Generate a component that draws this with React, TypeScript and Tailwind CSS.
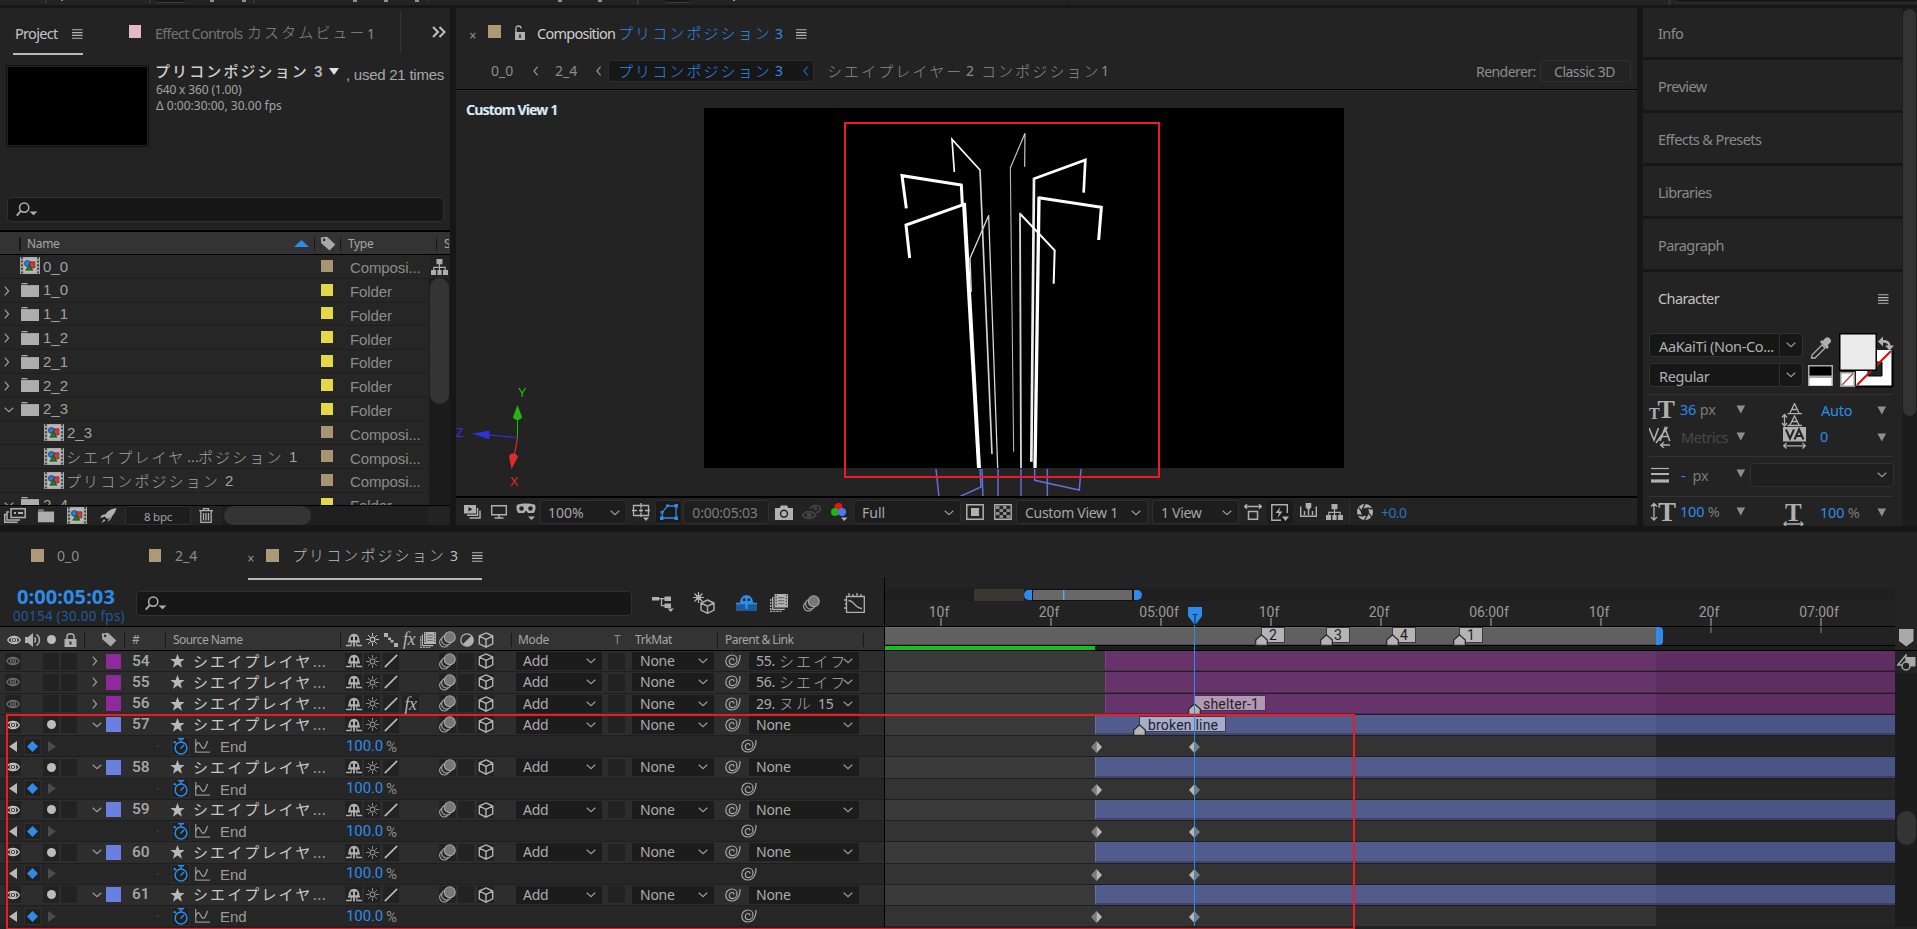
import React from "react";

type IconProps = { w: number; h: number; vb?: string; c?: string; children: React.ReactNode };

function Icon({ w, h, vb, c = "", children }: IconProps) {
  return (
    <svg width={w} height={h} viewBox={vb ?? `0 0 ${w} ${h}`} className={`block shrink-0 ${c}`} fill="none">
      {children}
    </svg>
  );
}

const JP =
  "font-['Noto_Sans_CJK_JP',sans-serif] font-light text-[15px] tracking-[2.1px] leading-none whitespace-nowrap -translate-x-px -translate-y-px";
const JP_TAB =
  "font-['Noto_Sans_CJK_JP',sans-serif] font-light text-[15px] tracking-[2.1px] leading-none whitespace-nowrap -translate-x-px -translate-y-[2px]";
const G = "#b0b0b0";

/* ---------- icons ---------- */

const Burger = ({ c = "text-[#b4b4b4]" }: { c?: string }) => (
  <Icon w={11} h={10} c={c}>
    <path d="M0 .75h10.5M0 3.6h10.5M0 6.4h10.5M0 9.2h10.5" stroke="currentColor" strokeWidth="1.1" />
  </Icon>
);
const ChevD = ({ c = "text-[#9a9a9a]" }: { c?: string }) => (
  <Icon w={10} h={6} c={c}>
    <path d="M.7.7 5 4.6 9.3.7" stroke="currentColor" strokeWidth="1.2" />
  </Icon>
);
const ChevR = ({ c = "text-[#a0a0a0]" }: { c?: string }) => (
  <Icon w={6} h={10} c={c}>
    <path d="M.8.7 4.6 5 .8 9.3" stroke="currentColor" strokeWidth="1.2" />
  </Icon>
);
const ChevL = ({ c = "text-[#8c8c8c]" }: { c?: string }) => (
  <Icon w={6} h={10} c={c}>
    <path d="M4.6.7 1 5l3.6 4.3" stroke="currentColor" strokeWidth="1.3" />
  </Icon>
);
const Cross = () => (
  <Icon w={6} h={7}>
    <path d="M.5.8 5.3 6.3M5.3.8.5 6.3" stroke="#8c8c8c" strokeWidth="1.1" />
  </Icon>
);
const SearchIcon = () => (
  <Icon w={22} h={15}>
    <circle cx="8.2" cy="5.6" r="4.6" stroke={G} strokeWidth="1.5" />
    <path d="M4.9 8.9.8 13.6" stroke={G} strokeWidth="1.8" />
    <path d="M13.5 9.5h8l-4 3.8z" fill={G} />
  </Icon>
);
const Tag = () => (
  <Icon w={16} h={15}>
    <path d="M.8 1.6 7 .7l8.3 7.8-5.7 6L1.3 7.2z" fill="#a8a8a8" />
    <circle cx="4.1" cy="3.9" r="1.3" fill="#333" />
  </Icon>
);
const Comp = () => (
  <Icon w={20} h={17}>
    <path d="M0 0h20v17H0z" fill="#a9a9a9" />
    <path d="M1.9 0v17M18.1 0v17" stroke="#303030" strokeWidth="1.6" strokeDasharray="2 1.6" />
    <path d="M4 1.5h12v14H4z" fill="#b9b9b9" />
    <circle cx="7.4" cy="6.4" r="3" fill="#1f7fe0" stroke="#222" strokeWidth=".6" />
    <path d="M9.8 4.8h5v6h-5z" fill="#e03434" stroke="#222" strokeWidth=".6" />
    <path d="m9.3 7.6 3.6 5.6H5.8z" fill="#128a12" stroke="#222" strokeWidth=".6" />
  </Icon>
);
const Folder = () => (
  <Icon w={18} h={15}>
    <path d="M.5 1h6v2h11.500v12H0V3h.5z" fill="#adadad" />
    <path d="M0 2.600h18" stroke="#262626" strokeWidth=".8" />
  </Icon>
);
const Tree = () => (
  <Icon w={17} h={16}>
    <path d="M5.500 0h6v5.200h-6zM0 11h5.600v5H0zM11.400 11H17v5h-5.600zM5.900 11h5.200v5H5.900z" fill="#adadad" />
    <path d="M8.500 5v6M2.800 11V8.400h11.400V11" stroke="#adadad" strokeWidth="1.2" />
    <path d="M5.750 10.600V16M11.250 10.600V16" stroke="#232323" strokeWidth="1.3" />
  </Icon>
);
const Eye = ({ c = "text-[#bdbdbd]" }: { c?: string }) => (
  <Icon w={14} h={10} c={c}>
    <path d="M.7 5C3.200.3 10.800.3 13.300 5 10.800 9.700 3.200 9.700.7 5z" stroke="currentColor" strokeWidth="1.400" />
    <circle cx="7" cy="5" r="2.700" stroke="currentColor" strokeWidth="1.300" />
    <circle cx="7" cy="5" r="1.200" fill="currentColor" />
  </Icon>
);
const Shy = ({ c = "text-[#b0b0b0]" }: { c?: string }) => (
  <Icon w={16} h={14} c={c}>
    <path d="M2.500 8.500C2.300 3.500 5 .8 8 .8s5.700 2.700 5.500 7.700z" fill="currentColor" />
    <path d="M4.800 3.800h2.200v3.400H4.800zM9 3.800h2.200v3.400H9z" fill="#222" />
    <path d="M2 8.700h12M0 12.500h5.500M10.500 12.500H16" stroke="currentColor" strokeWidth="1.400" />
    <path d="M8 6v7.500" stroke="currentColor" strokeWidth="1.800" />
    <path d="M5.200 9v3.500M10.800 9v3.500" stroke="currentColor" strokeWidth="1" />
  </Icon>
);
const Sun = ({ c = "text-[#8a8a8a]" }: { c?: string }) => (
  <Icon w={13} h={13} c={c}>
    <circle cx="6.500" cy="6.500" r="2.400" stroke="currentColor" strokeWidth="1.200" />
    <path
      d="M6.500 0v3M6.500 10v3M0 6.500h3M10 6.500h3M2 2l2 2M9 9l2 2M11 2 9 4M4 9l-2 2"
      stroke="currentColor"
      strokeWidth="1"
    />
  </Icon>
);
const Slash = () => (
  <Icon w={14} h={14}>
    <path d="M.8 13.200 13.200.8" stroke="#b8b8b8" strokeWidth="1.700" />
  </Icon>
);
const Blur = () => (
  <Icon w={17} h={17}>
    <circle cx="5.300" cy="11.300" r="4.700" fill="#2a2a2a" stroke="#a8a8a8" strokeWidth="1.100" />
    <circle cx="7.600" cy="9" r="5" fill="#2a2a2a" stroke="#a8a8a8" strokeWidth="1.100" />
    <circle cx="10.800" cy="6.200" r="5.400" fill="#777" stroke="#a8a8a8" strokeWidth="1.100" />
  </Icon>
);
const Cube = ({ s = 16 }: { s?: number }) => (
  <Icon w={s} h={s} vb="0 0 16 16">
    <path d="M8 .9 14.700 4v7.800L8 15.100 1.300 11.800V4zM1.300 4 8 7.400 14.700 4M8 7.400v7.700" stroke="#b4b4b4" strokeWidth="1.400" />
  </Icon>
);
const Whip = () => (
  <Icon w={16} h={14}>
    <path
      d="M14.800 1c.9 6-2.500 12-8 12C3.200 13 .8 10.500.8 7.200.8 3.700 3.600 1 7 1c3 0 5 2.100 5 4.700 0 2.800-1.900 4.900-4.300 4.900-2 0-3.400-1.300-3.400-3.100 0-1.700 1.300-3 2.800-3 1.300 0 2 .9 1.700 2.200"
      stroke="#a9a9a9"
      strokeWidth="1.200"
    />
  </Icon>
);
const Star = () => (
  <Icon w={15} h={14}>
    <path d="m7.500 0 1.900 5h5.300l-4.200 3.300 1.500 5.400-4.500-3.200L3 13.700l1.500-5.400L.3 5h5.300z" fill="#b8b8b8" />
  </Icon>
);
const Fx = () => <span className="font-['Liberation_Serif',serif] text-[18px] italic leading-none text-[#b4b4b4] tracking-[-0.5px]">fx</span>;
const LockIcon = () => (
  <Icon w={13} h={14}>
    <path d="M.5 6h12v8H.5z" fill={G} />
    <path d="M3 6V3.600C3 1.800 4.500.8 6.500.8S10 1.800 10 3.600V6" stroke={G} strokeWidth="1.500" />
    <path d="M6.500 8.500v3" stroke="#2c2c2c" strokeWidth="2" />
  </Icon>
);
const FrameBlend = () => (
  <Icon w={18} h={18}>
    <path d="M4.500 0H18v13.500H4.500z" fill="#b4b4b4" />
    <path d="M8 3h6.500v1.200H8zM8 6h6.500v1.200H8zM8 9h6.500v1.200H8z" fill="#6f6f6f" />
    <path d="M6.200.8v12M16.400.8v12" stroke="#333" strokeWidth="1.100" strokeDasharray="1.500 1.500" />
    <path d="M2.700 3v12.300h12" stroke="#b4b4b4" strokeWidth="1.300" />
    <path d="M.7 5v12.300h11" stroke="#b4b4b4" strokeWidth="1.300" strokeDasharray="2 1" />
  </Icon>
);
const RoofMarker = () => (
  <Icon w={13} h={12}>
    <path d="M.7 11.300V6L6.500.9 12.300 6v5.300z" fill="#b4b4b4" stroke="#242424" strokeWidth="1.200" />
  </Icon>
);
const TriDown = () => (
  <Icon w={10} h={9}>
    <path d="M.5.5h8.600L4.800 8.500z" fill="#8f8f8f" />
  </Icon>
);

/* ---------- project panel ---------- */

type Item = { kind: "comp" | "folder"; name: React.ReactNode; depth: number; open?: boolean };
const items: Item[] = [
  { kind: "comp", name: "0_0", depth: 0 },
  { kind: "folder", name: "1_0", depth: 0 },
  { kind: "folder", name: "1_1", depth: 0 },
  { kind: "folder", name: "1_2", depth: 0 },
  { kind: "folder", name: "2_1", depth: 0 },
  { kind: "folder", name: "2_2", depth: 0 },
  { kind: "folder", name: "2_3", depth: 0, open: true },
  { kind: "comp", name: "2_3", depth: 1 },
  {
    kind: "comp",
    depth: 1,
    name: (
      <>
        <span className={`${JP} w-[120px]`}>シエイプレイヤ</span>
        <span className="w-[12px] tracking-[-0.3px]">...</span>
        <span className={`${JP} w-[90px]`}>ポジション</span>1
      </>
    ),
  },
  {
    kind: "comp",
    depth: 1,
    name: (
      <>
        <span className={`${JP} w-[158px]`}>プリコンポジション</span>2
      </>
    ),
  },
  { kind: "folder", name: "2_4", depth: 0, open: true },
];

function ProjectPanel() {
  return (
    <section className="flex h-[517px] w-[450px] shrink-0 flex-col bg-[#232323]">
      <div className="flex h-[55px] shrink-0 items-start [&>*]:shrink-0">
        <div className="ml-[13px] flex h-[47px] w-[70px] items-center justify-between border-b-2 border-[#b9b9b9] pl-[2px] pt-[6px]">
          <span className="text-[14.5px] tracking-[-0.7px] text-[#c4c4c4]">Project</span>
          <Burger />
        </div>
        <div className="ml-[46px] mt-[17px] h-[13px] w-[12px] bg-[#e3b9c9]" />
        <div className="ml-[14px] flex h-[51px] w-[93px] items-center whitespace-nowrap text-[14.5px] tracking-[-0.8px] text-[#727272]">Effect Controls</div>
        <div className="flex h-[51px] w-[152px] items-center text-[#8a8a8a]">
          <span className={`${JP_TAB} w-[119px]`}>カスタムビュー</span>
          <span className="text-[14px]">1</span>
        </div>
        <div className="mt-[3px] h-[42px] w-px bg-[#343434]" />
        <Icon w={14} h={12} c="ml-[31px] mt-[18px]">
          <path d="m1 1 5 5-5 5M7.500 1l5 5-5 5" stroke="#c0c0c0" strokeWidth="2" />
        </Icon>
      </div>

      <div className="flex h-[134px] shrink-0 pl-[6px] pt-[2px]">
        <div className="h-[82px] w-[143px] border border-[#111] bg-black outline outline-1 -outline-offset-2 outline-[#222]" />
        <div className="ml-[7px] text-[12px] leading-[16px] text-[#a4a4a4]">
          <div className="flex h-[17px] items-center">
            <span className="w-[158px] -translate-x-px -translate-y-[3px] whitespace-nowrap font-['Noto_Sans_CJK_JP',sans-serif] text-[15px] font-medium leading-none tracking-[2.1px] text-[#cfcfcf]">プリコンポジション</span>
            <span className="w-[15px] -translate-y-[2px] font-['Roboto',sans-serif] text-[15px] font-bold text-[#b4b4b4]">3</span>
            <Icon w={10} h={7} c="mr-[7px] -translate-y-[2px]">
              <path d="M0 0h10L5 7z" fill="#e2e2e2" />
            </Icon>
            <span className="mt-[2px] whitespace-nowrap font-['Liberation_Sans',sans-serif] text-[15px] tracking-[-0.25px] text-[#a8a8a8]">, used 21 times</span>
          </div>
          <div className="tracking-[-0.15px]">640 x 360 (1.00)</div>
          <div className="tracking-[0px]">Δ 0:00:30:00, 30.00 fps</div>
        </div>
      </div>

      <div className="ml-[7px] flex h-[25px] w-[437px] shrink-0 items-center rounded-[4px] border border-[#303030] bg-[#171717] pl-[8px]">
        <SearchIcon />
      </div>

      <div className="mt-[8px] flex h-[25px] shrink-0 items-center border-b border-t-2 border-black bg-[#333] pt-px text-[12px] tracking-[-0.35px] text-[#a6a6a6] [&>*]:shrink-0">
        <div className="ml-[19px] h-[14px] w-[2px] bg-[#181818]" />
        <span className="ml-[6px] w-[267px]">Name</span>
        <Icon w={15} h={7} c="mr-[5px]">
          <path d="M0 7h15L7.500 0z" fill="#2d8ceb" />
        </Icon>
        <div className="mr-[5px] h-[14px] w-px bg-[#181818]" />
        <Tag />
        <div className="ml-[4px] h-[14px] w-px bg-[#181818]" />
        <span className="ml-[7px] w-[88px]">Type</span>
        <div className="h-[14px] w-px bg-[#181818]" />
        <span className="ml-[7px] w-[5px] overflow-hidden">S</span>
      </div>

      <div className="flex h-[250px] shrink-0 overflow-hidden">
        <div className="w-[429px] font-['Liberation_Sans',sans-serif] text-[15px] text-[#a2a2a2]">
          {items.map((it, i) => (
            <div key={i} className="flex h-[23.8px] items-center border-b border-[#1f1f1f] bg-[#262626] pt-px">
              <div className="flex w-[20px] shrink-0 items-center pl-[4px]">
                {it.kind === "folder" && (it.open ? <ChevD /> : <ChevR />)}
              </div>
              <div className={it.depth ? "ml-[24px] flex w-[277px] items-center" : "flex w-[301px] items-center"}>
                <div className="w-[23px] pb-[2px]">
                  {it.kind === "comp" ? <Comp /> : <div className="pl-px"><Folder /></div>}
                </div>
                <div className="flex items-center whitespace-nowrap">{it.name}</div>
              </div>
              <div className={it.kind === "comp" ? "mb-[2px] h-[12px] w-[12px] bg-[#a89472]" : "mb-[2px] h-[12px] w-[12px] bg-[#e4d848]"} />
              <span className="ml-[17px] mt-[3px] text-[15px] tracking-[-0.1px] text-[#8c8c8c]">{it.kind === "comp" ? "Composi..." : "Folder"}</span>
            </div>
          ))}
        </div>
        <div className="flex w-[21px] flex-col bg-[#1c1c1c]">
          <div className="flex h-[23px] justify-center bg-[#232323] pt-[4px]">
            <Tree />
          </div>
          <div className="ml-px h-[126px] w-[19px] rounded-full bg-[#343434]" />
        </div>
      </div>

      <div className="flex h-[20px] shrink-0 items-center border-t border-black [&>*]:shrink-0">
        <Icon w={22} h={15} c="ml-[4px]">
          <path d="M7 .800h14.200v8.800H7z" stroke={G} strokeWidth="1.500" />
          <path d="M10 5h2M14 5h5" stroke={G} strokeWidth="2" />
          <path d="M5 4H3v8h13M2.500 6.500H.7v7.700h13" stroke={G} strokeWidth="1.500" />
        </Icon>
        <div className="ml-[11px] scale-[.92]"><Folder /></div>
        <div className="ml-[12px]"><Comp /></div>
        <Icon w={17} h={16} c="ml-[13px]">
          <path d="M16.500 0C10 1 6 4 4.500 8.500l3 2.500C12 9 15 6 16.500 0zM6 6 2 7 0 10l4-1zM8.500 11.500 8 14l3.500-4 .5-2zM4 11l-2.500 4L5.500 12.500z" fill={G} />
        </Icon>
        <div className="ml-[8px] flex h-[19px] w-[66px] items-center justify-center rounded-[3px] border border-[#2f2f2f] bg-[#1d1d1d] pt-[2px] text-[11.500px] tracking-[-0.200px] text-[#a0a0a0]">8 bpc</div>
        <Icon w={14} h={15} c="ml-[8px]">
          <path d="M0 2.700h14M4.500 2.500V.700h5v1.800" stroke={G} strokeWidth="1.300" />
          <path d="M1.800 3v11.300h10.400V3M4.500 5v7.500M7 5v7.500M9.500 5v7.500" stroke={G} strokeWidth="1.300" />
        </Icon>
        <div className="ml-[9px] flex h-[19px] w-[206px] bg-[#1f1f1f]">
          <div className="ml-[2px] h-[19px] w-[87px] rounded-full bg-[#343434]" />
        </div>
      </div>
    </section>
  );
}

/* ---------- composition panel ---------- */

function Viewport() {
  return (
    <svg width="1181" height="405" viewBox="456 91 1181 405" className="block" fill="none">
      <path d="M704 108h640v360H704z" fill="#000" />
      <g transform="translate(820 100) scale(.33333)" stroke="#fff" strokeLinejoin="miter">
        <path d="M403 216 396 118l84 92" strokeWidth="5" />
        <path d="m480 208 36 854" strokeWidth="5" stroke="#d4d4d4" />
        <path d="m614 200 1-100-44 104" strokeWidth="3.500" stroke="#cdcdcd" />
        <path d="m571 200 10 855" strokeWidth="3.200" stroke="#b8b8b8" />
        <path d="m259 325-13-98 178 28 3 60" strokeWidth="9" />
        <path d="m269 474-11-99 174-62" strokeWidth="9" />
        <path d="M426 308h12l45 796h-12z" fill="#fff" stroke="none" />
        <path d="m454 575-4-100 55-126" strokeWidth="4" stroke="#d8d8d8" />
        <path d="m506 345 27 759" strokeWidth="3.800" stroke="#d8d8d8" />
        <path d="m791 278 5-98-154 56" strokeWidth="8" />
        <path d="m642 233-8 852" strokeWidth="8" stroke="#eee" />
        <path d="m836 420 8-98-188-29" strokeWidth="9" />
        <path d="m657 290-12 814" strokeWidth="10" />
        <path d="m701 551 3-100-103-109" strokeWidth="6" />
        <path d="m600 338 3 766" strokeWidth="5.500" stroke="#d4d4d4" />
        <g stroke="#5f70d6" strokeWidth="4.500">
          <path d="m348 1107 9 84M480 1107l3 54-66 30M486 1107l3 84M534 1107v84M603 1107v84M682 1107v84M644 1107v34l134 29 5-63" />
        </g>
      </g>
      <path d="M517.500 437.500v-20" stroke="#22b80f" strokeWidth="1" />
      <path d="m517.500 405 4.500 12c-1 4-8 4-9 0z" fill="#22b80f" />
      <path d="m517 437.500-28-2.500" stroke="#3030e0" strokeWidth="1.200" />
      <path d="m471.500 433.500 18-2.800v8.600z" fill="#3030e0" />
      <path d="m517.500 437.500-3.500 20" stroke="#e02c2c" strokeWidth="1.200" />
      <path d="m511.500 469-2.500-13c2-4 8-3 9 1z" fill="#e02c2c" />
      <g fontFamily="Liberation Sans" fontSize="12.500">
        <text x="518" y="397" fill="#22b80f">Y</text>
        <text x="456" y="437" fill="#3030e0">Z</text>
        <text x="510" y="486" fill="#e02c2c">X</text>
      </g>
    </svg>
  );
}

function Select({ c, label, children }: { c: string; label: string; children?: React.ReactNode }) {
  return (
    <div className={`flex h-[24px] items-center justify-between rounded-[3px] border border-[#2f2f2f] bg-[#1d1d1d] pl-[7px] pr-[6px] pt-px text-[14px] text-[#a6a6a6] ${c}`}>
      <span className="whitespace-nowrap">{label}</span>
      {children ?? <ChevD />}
    </div>
  );
}

function CompositionPanel() {
  return (
    <section className="ml-[6px] flex h-[517px] w-[1181px] shrink-0 flex-col bg-[#232323]">
      <div className="flex h-[52px] shrink-0 items-center text-[14.500px] [&>*]:shrink-0">
        <div className="ml-[14px] mt-[2px] w-[18px]"><Cross /></div>
        <div className="-mt-[5px] h-[13px] w-[13px] bg-[#ad9877]" />
        <Icon w={11} h={15} c="-mt-[4px] ml-[13px]">
          <path d="M1 7h10v8H1z" fill={G} />
          <path d="M2 7V3.500C2 1.800 3 1 4.500 1S7 1.800 7 3.500" stroke={G} strokeWidth="1.400" />
          <path d="M6 9.500V13" stroke="#232323" strokeWidth="1.600" />
        </Icon>
        <span className="ml-[12px] w-[82px] tracking-[-0.75px] text-[#cfcfcf]">Composition</span>
        <span className={`${JP_TAB} w-[156px] text-[#2d8ceb]`}>プリコンポジション</span>
        <span className="w-[21px] -translate-y-px text-[14px] text-[#2d8ceb]">3</span>
        <Burger />
      </div>
      <div className="flex h-[29px] shrink-0 items-start text-[14px] leading-[22px] text-[#8c8c8c] [&>*]:h-[22px] [&>*]:shrink-0">
        <span className="ml-[35px] w-[42px]">0_0</span>
        <div className="flex w-[22px] items-center"><ChevL /></div>
        <span className="w-[41px]">2_4</span>
        <div className="flex w-[12px] items-center"><ChevL /></div>
        <div className="flex w-[206px] items-center rounded-[3px] border border-[#2c2c2c] bg-[#171717] text-[#2d8ceb]">
          <span className={`${JP} ml-[10px] w-[156px]`}>プリコンポジション</span>
          <span className="w-[28px]">3</span>
          <ChevL c="text-[#1f62a5]" />
        </div>
        <span className={`${JP} ml-[14px] flex w-[138px] items-center`}>シエイプレイヤー</span>
        <span className="w-[16px]">2</span>
        <span className={`${JP} flex w-[119px] items-center`}>コンポジション</span>
        <span className="w-[375px]">1</span>
        <span className="mt-[1px] w-[64px] tracking-[-0.55px] text-[#8c8c8c]">Renderer:</span>
        <div className="w-[91px] rounded-[3px] border border-[#303030] pr-[2px] text-center leading-[21px] tracking-[-0.5px] text-[#8f8f8f]">Classic 3D</div>
      </div>
      <div className="h-[2px] shrink-0 border-b border-[#2e2e2e] bg-black" />
      <div className="relative h-[405px] shrink-0">
        <Viewport />
        <span className="absolute left-[10px] top-[9px] text-[14px] font-semibold leading-[20px] tracking-[-0.65px] text-[#ececec] [text-shadow:1px_0_0_#3c7fa8]">Custom View 1</span>
      </div>
      <div className="flex h-[29px] shrink-0 items-center border-t-2 border-black pt-px [&>*]:shrink-0">
        <Icon w={17} h={14} c="ml-[8px]">
          <path d="M0 0h12v8.500H0z" fill={G} />
          <path d="m4.500 2 4 2.300-4 2.300z" fill="#232323" />
          <path d="M13.500 3v7.200H3M16 5.500v7.500H5.500" stroke={G} strokeWidth="1.500" />
        </Icon>
        <Icon w={16} h={14} c="ml-[10px]">
          <path d="M.7.700h14.600v9H.7z" stroke={G} strokeWidth="1.400" />
          <path d="M8 10v2.500M3.500 13h9" stroke={G} strokeWidth="1.600" />
        </Icon>
        <Icon w={20} h={18} c="ml-[9px]">
          <path d="M1.500 1.500C6 0 14 0 18.500 1.500c1.500 1 1.500 6-1 8.500H12l-2-2.500L8 10H2.500C0 7.500 0 2.500 1.500 1.500z" fill={G} />
          <circle cx="5.500" cy="5.500" r="2.300" fill="#232323" />
          <circle cx="14.500" cy="5.500" r="2.300" fill="#232323" />
          <path d="M12 13.500h7L15.500 17z" fill={G} />
        </Icon>
        <Select c="ml-[4px] w-[87px]" label="100%" />
        <Icon w={18} h={18} c="ml-[5px]">
          <path d="M1.500 2.500h15v10h-15z" stroke={G} strokeWidth="1.300" />
          <path d="M9 0v5M9 10v4M0 7.500h5M13 7.500h5M7 7.500h4M9 5.500v4" stroke={G} strokeWidth="1.300" />
          <path d="M11 14.500h6L14 18z" fill={G} />
        </Icon>
        <div className="ml-[5px] flex h-[24px] w-[27px] items-center justify-center rounded-[3px] border border-[#2c2c2c] bg-[#1a1a1a]">
          <Icon w={18} h={16}>
            <path d="m2 14 .5-6L7.500 2H16v12z" stroke="#2d8ceb" strokeWidth="1.300" />
            <path d="M0 12.500h3.500V16H0zM14.500 12.500H18V16h-3.500zM14.500 0H18v3.500h-3.500zM6 .5h3V3H6zM.5 7h3v2.500h-3z" fill="#2d8ceb" />
          </Icon>
        </div>
        <div className="ml-px flex h-[24px] w-[86px] items-center justify-center rounded-[3px] border border-[#2f2f2f] bg-[#1f1f1f] pr-[2px] text-[14px] tracking-[-0.2px] text-[#7d7d7d]">0:00:05:03</div>
        <Icon w={18} h={15} c="ml-[6px]">
          <path d="M0 3h4.500L6 .5h6L13.500 3H18v12H0z" fill={G} />
          <circle cx="9" cy="8.700" r="3.400" stroke="#232323" strokeWidth="1.500" />
        </Icon>
        <Icon w={19} h={17} c="ml-[9px]">
          <path d="M.7 11c2.500-4.500 10.500-4.500 13 0-2.500 4.500-10.500 4.500-13 0z" stroke="#444" strokeWidth="1.600" />
          <circle cx="7.200" cy="11" r="2.500" fill="#444" />
          <path d="M8 5c2-4 8-4.500 10.500-1.500-.5 3-2 5-4.500 5" stroke="#444" strokeWidth="1.600" />
          <circle cx="13.500" cy="4.500" r="1.800" fill="#444" />
        </Icon>
        <Icon w={18} h={18} c="ml-[10px]">
          <circle cx="7.500" cy="4" r="4" fill="#f01010" />
          <circle cx="4" cy="9" r="4" fill="#16b716" />
          <circle cx="11" cy="9" r="4" fill="#4a78f0" />
          <path d="M10 14.500h6.500L13.200 18z" fill={G} />
        </Icon>
        <Select c="ml-[4px] w-[108px] pl-[8px]!" label="Full" />
        <Icon w={18} h={16} c="ml-[5px]">
          <path d="M.8.800h16.400v14.400H.8z" stroke={G} strokeWidth="1.500" />
          <path d="M5 4h8v8H5z" fill={G} />
        </Icon>
        <Icon w={18} h={16} c="ml-[10px]">
          <path d="M.8.800h16.400v14.400H.8z" stroke={G} strokeWidth="1.400" />
          <path d="M2 2h3.500v3H2zM9 2h3.500v3H9zM5.500 5H9v3H5.500zM12.500 5H16v3h-3.500zM2 8h3.500v3H2zM9 8h3.500v3H9zM5.500 11H9v3H5.500zM12.500 11H16v3h-3.500z" fill="#8a8a8a" />
        </Icon>
        <Select c="ml-[4px] w-[132px] pl-[8px]! tracking-[-0.300px]" label="Custom View 1" />
        <Select c="ml-[4px] w-[87px] pl-[8px]! tracking-[-0.300px]" label="1 View" />
        <Icon w={18} h={16} c="ml-[5px]">
          <path d="M0 2.500h18M3 .3.700 2.500 3 4.700M15 .3l2.300 2.200L15 4.700M4.500 7.500h9v7.700h-9z" stroke={G} strokeWidth="1.500" />
        </Icon>
        <div className="ml-[5px] flex h-[24px] w-[26px] items-center justify-center rounded-[3px] bg-[#1b1b1b]">
          <Icon w={18} h={17}>
            <path d="M16.300 9V.800H.8v15.400H10" stroke={G} strokeWidth="1.400" />
            <path d="m9.500 3-5 6H8l-1.500 5 5-6.500H8z" fill={G} />
            <path d="M11 12.500h7L14.500 17z" fill={G} />
          </Icon>
        </div>
        <Icon w={17} h={14} c="ml-[7px] -mt-[4px]">
          <path d="M.7 3.500v9.700h15.600V3.500M4.500 8v4M12.500 8v4M8.500 6v6" stroke={G} strokeWidth="1.400" />
          <path d="M5.700 0h5.600v4.500L8.500 7 5.700 4.500z" fill={G} />
        </Icon>
        <div className="ml-[9px]"><Tree /></div>
        <div className="ml-[6px] h-[24px] w-px bg-[#2f2f2f]" />
        <Icon w={16} h={16} c="ml-[7px]">
          <circle cx="8" cy="8" r="6" stroke={G} strokeWidth="4" />
          <path d="M8 0 5 6M15.500 5 9.500 4M14.500 13 11 8M7.500 16l3.500-6M.5 11l6 1M2 3.500 5 8.500" stroke="#232323" strokeWidth="1.300" />
        </Icon>
        <span className="ml-[8px] text-[14px] tracking-[-0.600px] text-[#2673c2]">+0.0</span>
      </div>
    </section>
  );
}

/* ---------- right column ---------- */

function CharRow({ h, left, v1, v2, tri = true }: { h: string; left: React.ReactNode; v1: React.ReactNode; v2: React.ReactNode; tri?: boolean }) {
  return (
    <div className={`flex items-start text-[14.500px] leading-[20px] text-[#7a7a7a] [&>*]:shrink-0 ${h}`}>
      <div className="w-[31px]">{left}</div>
      <div className="w-[56px] whitespace-nowrap">{v1}</div>
      <div className="w-[14px] pt-[6px]"><TriDown /></div>
      {v2}
      {tri && <div className="pt-[7px]"><TriDown /></div>}
    </div>
  );
}
const Blue = ({ children }: { children: React.ReactNode }) => <span className="text-[#2d8ceb]">{children}</span>;

function FontSelect({ label, c }: { label: string; c: string }) {
  return (
    <div className={`flex h-[24px] w-[154px] items-center rounded-[3px] border border-[#303030] bg-[#171717] text-[14.500px] tracking-[-0.350px] text-[#b0b0b0] ${c}`}>
      <span className="h-full w-[130px] whitespace-nowrap pl-[9px] pt-px leading-[22px]">{label}</span>
      <div className="flex h-full w-[23px] items-center justify-center border-l border-[#303030]">
        <ChevD />
      </div>
    </div>
  );
}

function RightColumn() {
  return (
    <aside className="ml-[6px] flex h-[518px] w-[274px] shrink-0">
      <div className="flex w-[259px] flex-col overflow-hidden bg-[#232323] text-[14.500px] tracking-[-0.600px] text-[#8a8a8a]">
        {["Info", "Preview", "Effects & Presets", "Libraries", "Paragraph"].map((t) => (
          <div key={t} className="flex h-[53px] shrink-0 items-center border-b-[3px] border-[#161616] pl-[15px] pt-[3px] first:h-[52px]">
            {t}
          </div>
        ))}
        <div className="flex h-[61px] shrink-0 items-center justify-between pl-[15px] pr-[13px] pb-[7px] text-[#c0c0c0]">
          <span>Character</span>
          <Burger />
        </div>
        <div className="flex h-[61px] shrink-0 pl-[6px] tracking-normal">
          <div>
            <FontSelect label="AaKaiTi (Non-Co..." c="" />
            <FontSelect label="Regular" c="mt-[6px]" />
          </div>
          <svg width="90" height="58" viewBox="1804 332 90 58" fill="none" className="ml-px -mt-px block">
            <path d="m1811.500 358 .5-3 10-10 3 3-10 10z" stroke="#b0b0b0" strokeWidth="1.300" />
            <path d="m1820 342 7 7 2-2-1.500-1.500 3-3c2-2-2-7-5-4.500l-3 3-1-1z" fill="#b0b0b0" />
            <path d="M1808 365h25v21h-25z" fill="#aaa" />
            <path d="M1809.500 366.500h22v9h-22z" fill="#000" />
            <path d="M1809.500 378h22v7.500h-22z" fill="#fff" />
            <path d="M1856 350h37.500v37.500H1856z" fill="#000" />
            <path d="M1856 350h35.500v35.500H1856z" fill="#fff" />
            <path d="M1868 362h14v14h-14z" fill="#222" stroke="#000" strokeWidth="1" />
            <path d="m1857 385 34-34" stroke="#d01212" strokeWidth="2.200" />
            <path d="M1840 372h15v15h-15z" fill="#999" />
            <path d="M1841.500 373.500h12v12h-12z" fill="#fff" />
            <path d="m1842 385 11-11.500" stroke="#d04040" strokeWidth="1.500" />
            <path d="M1839 333h38v38h-38z" fill="#000" />
            <path d="M1840.500 334.500h35v35h-35z" fill="#ebebeb" />
            <path d="M1882 341.500c5-.5 7.500 1 7.500 5" stroke="#b0b0b0" strokeWidth="2.600" />
            <path d="m1878 341.500 5-5v10zM1885 345.500h9l-4.500 5z" fill="#b0b0b0" />
          </svg>
        </div>
        <div className="mx-[6px] mr-[9px] h-px shrink-0 bg-[#333]" />
        <div className="shrink-0 pl-[6px] tracking-[-0.200px]">
          <div className="h-[61px] pt-[4px]">
            <CharRow
              h="h-[27px]"
              left={
                <div className="flex items-end font-['Liberation_Serif',serif] font-bold text-[#b0b0b0]">
                  <span className="text-[16px] leading-[13px]">T</span>
                  <span className="-ml-[2px] text-[26px] leading-[21px]">T</span>
                </div>
              }
              v1={<><Blue>36</Blue>&nbsp;px</>}
              v2={
                <>
                  <div className="ml-[31px] w-[40px] pt-[4px]">
                    <Icon w={21} h={24}>
                      <path d="M3.500 12.500v9M1 14.500l2.500-3 2.500 3M1 20l2.500 3L6 20" stroke={G} strokeWidth="1.300" />
                      <path d="m9 10 4.500-9.500L18 10M10.500 6.500h6M9 22l4.500-9L18 22M10.500 18.500h6M6.500 10.600H21M6.500 22.500H21" stroke={G} strokeWidth="1.300" />
                    </Icon>
                  </div>
                  <span className="w-[56px] pt-px"><Blue>Auto</Blue></span>
                </>
              }
            />
            <CharRow
              h="h-[26px]"
              left={
                <Icon w={23} h={22}>
                  <path d="m0 2 5 12 4.500-12M18.500 1 7 17M11 15l5-13 4.800 13M12.500 10.500h7" stroke={G} strokeWidth="1.600" />
                  <path d="M21 19h-9M15 16l-3.500 3 3.500 3" stroke={G} strokeWidth="1.300" />
                </Icon>
              }
              v1={<div className="pl-px pt-px tracking-[-0.450px] text-[#4a4a4a]">Metrics</div>}
              v2={
                <>
                  <div className="ml-[33px] w-[37px] pt-px">
                    <Icon w={24} h={22}>
                      <path d="M0 0h23v14.500H0z" fill={G} />
                      <path d="m3 2.500 4 9 4-9M11.500 12.500l4.500-10 4.500 10M13 9h6" stroke="#222" strokeWidth="2" />
                      <path d="M.8 18.800h21.400M3.500 16 .7 18.800l2.800 2.700M19.500 16l2.800 2.800-2.800 2.700" stroke={G} strokeWidth="1.300" />
                    </Icon>
                  </div>
                  <span className="w-[57px]"><Blue>0</Blue></span>
                </>
              }
            />
          </div>
          <div className="mr-[9px] h-px bg-[#333]" />
          <div className="h-[39px] pt-[6px]">
            <CharRow
              h="h-[26px]"
              tri={false}
              left={
                <Icon w={20} h={24}>
                  <path d="M2 5.500h18" stroke={G} strokeWidth="1.200" />
                  <path d="M2 11h18" stroke={G} strokeWidth="2" />
                  <path d="M2 18h18" stroke={G} strokeWidth="3.200" />
                </Icon>
              }
              v1={<div className="pl-px pt-[2px]"><Blue>-</Blue>&nbsp; px</div>}
              v2={
                <div className="flex h-[24px] w-[144px] items-center justify-end rounded-[3px] border border-[#303030] bg-[#1f1f1f] pr-[6px]">
                  <ChevD />
                </div>
              }
            />
          </div>
          <div className="mr-[9px] h-px bg-[#333]" />
          <div className="pt-[4px]">
            <CharRow
              h="h-[26px]"
              left={
                <div className="flex items-center pt-px">
                  <Icon w={8} h={20} c="ml-px">
                    <path d="M4 1.500v16M1 4.500l3-3 3 3M1 15l3 3 3-3" stroke={G} strokeWidth="1.300" />
                  </Icon>
                  <span className="font-['Liberation_Serif',serif] text-[27px] font-bold leading-[20px] text-[#b0b0b0]">T</span>
                </div>
              }
              v1={<><Blue>100</Blue> %</>}
              v2={
                <>
                  <div className="ml-[33px] flex w-[37px] flex-col">
                    <span className="pl-[2px] pt-[3px] font-['Liberation_Serif',serif] text-[25px] font-bold leading-[17px] text-[#b0b0b0]">T</span>
                    <Icon w={22} h={6}>
                      <path d="M1 3h19M3.500.500 1 3l2.500 2.500M17.500.500 20 3l-2.500 2.500" stroke={G} strokeWidth="1.300" />
                    </Icon>
                  </div>
                  <span className="w-[57px] pt-px"><Blue>100</Blue> %</span>
                </>
              }
            />
          </div>
        </div>
      </div>
      <div className="flex w-[15px] justify-center bg-[#1c1c1c] pt-px">
        <div className="h-[407px] w-[13px] rounded-[7px] bg-[#333]" />
      </div>
    </aside>
  );
}

/* ---------- timeline ---------- */

type Layer = { n: number; violet?: boolean; fx?: boolean; parent: React.ReactNode };
const layers: Layer[] = [
  { n: 54, violet: true, parent: <><span className="w-[24px]">55.</span><span className={`${JP} w-[62px]`}>シエイフ</span></> },
  { n: 55, violet: true, parent: <><span className="w-[24px]">56.</span><span className={`${JP} w-[62px]`}>シエイフ</span></> },
  { n: 56, violet: true, fx: true, parent: <><span className="w-[24px]">29.</span><span className={`${JP} w-[38px]`}>ヌル</span>15</> },
  { n: 57, parent: "None" },
  { n: 58, parent: "None" },
  { n: 59, parent: "None" },
  { n: 60, parent: "None" },
  { n: 61, parent: "None" },
];

function Cell({ c, on = true, children }: { c: string; on?: boolean; children?: React.ReactNode }) {
  return <div className={`flex h-[17px] shrink-0 items-center justify-center ${on ? "bg-[#222]" : ""} ${c}`}>{children}</div>;
}

function Drop({ c, children }: { c: string; children: React.ReactNode }) {
  return (
    <div className={`flex h-[18px] shrink-0 items-center justify-between overflow-hidden bg-[#1c1c1c] pl-[7px] pr-[6px] text-[14px] leading-[18px] tracking-[-0.250px] text-[#acacac] ${c}`}>
      <div className="flex items-center whitespace-nowrap">{children}</div>
      <ChevD />
    </div>
  );
}

function LayerRow({ l }: { l: Layer }) {
  return (
    <div className="flex h-[21.25px] items-center border-b border-[#1e1e1e] bg-[#2d2d2d]">
      <Cell c="ml-[5px] w-[16px]"><Eye c={l.violet ? "text-[#6b6b6b]" : "text-[#c4c4c4]"} /></Cell>
      <Cell c="ml-[22px] w-[16px]">{!l.violet && <div className="h-[9px] w-[9px] rounded-full bg-[#bcbcbc]" />}</Cell>
      <Cell c="ml-[2px] w-[16px]" />
      <div className="ml-[13px] flex w-[16px] shrink-0 pl-[2px]">{l.violet ? <ChevR /> : <ChevD />}</div>
      <div className={l.violet ? "h-[15px] w-[15px] shrink-0 bg-[#8f2a9c]" : "h-[15px] w-[15px] shrink-0 bg-[#6a7fe0]"} />
      <span className="ml-[11px] w-[38px] shrink-0 font-['Roboto',sans-serif] text-[15.500px] font-medium text-[#a8a8a8]">{l.n}</span>
      <Star />
      <span className="ml-[8px] w-[120px] shrink-0 -translate-y-px whitespace-nowrap font-['Noto_Sans_CJK_JP',sans-serif] text-[15px] leading-none tracking-[2.100px] text-[#c8c8c8]">シエイプレイヤ</span>
      <span className="w-[32px] shrink-0 text-[14px] tracking-[0.700px] text-[#a0a0a0]">...</span>
      <Cell c="w-[17px]"><Shy /></Cell>
      <Cell c="ml-[2px] w-[16px]"><Sun /></Cell>
      <Cell c="ml-[3px] w-[16px]"><Slash /></Cell>
      <Cell c="ml-[3px] w-[17px]" on={!!l.fx}>{l.fx && <Fx />}</Cell>
      <Cell c="ml-[20px] w-[17px]"><Blur /></Cell>
      <Cell c="ml-[2px] w-[16px]" />
      <Cell c="ml-[3px] w-[17px]"><Cube /></Cell>
      <Drop c="ml-[22px] w-[86px]">Add</Drop>
      <Cell c="ml-[6px] w-[17px]" />
      <Drop c="ml-[7px] w-[82px] pl-[8px]!">None</Drop>
      <div className="ml-[11px]"><Whip /></div>
      <Drop c="ml-[8px] w-[110px]">{l.parent}</Drop>
    </div>
  );
}

function PropertyRow() {
  return (
    <div className="flex h-[21.25px] items-center border-b border-[#1e1e1e] bg-[#262626] [&>*]:shrink-0">
      <Icon w={8} h={11} c="ml-[9px]"><path d="M8 0v11L0 5.500z" fill="#b8b8b8" /></Icon>
      <div className="ml-[7px] flex h-[17px] w-[17px] items-center justify-center border border-[#303030] bg-[#202020]">
        <Icon w={11} h={11}><path d="M5.500 0 11 5.500 5.500 11 0 5.500z" fill="#2d8ceb" /></Icon>
      </div>
      <Icon w={8} h={11} c="ml-[7px]"><path d="M0 0v11l8-5.500z" fill="#4c4c4c" /></Icon>
      <div className="ml-[101px] h-[2px] w-[2px] bg-[#3a3a3a]" />
      <div className="ml-[12px] flex h-[19px] w-[19px] items-center justify-center border border-[#303030] bg-[#202020]">
        <Icon w={16} h={17}>
          <circle cx="8" cy="10" r="5.900" stroke="#2d8ceb" strokeWidth="1.500" />
          <path d="M8 4V1.200M5 .8h6M2.200 3.500.800 5M1 3l2 2M7.500 10.500l3.500-3.500" stroke="#2d8ceb" strokeWidth="1.500" />
        </Icon>
      </div>
      <Icon w={15} h={14} c="ml-[5px]">
        <path d="M.7 0v13.200H15" stroke="#8f8f8f" strokeWidth="1.300" />
        <path d="M1 7c1.500-5 3-4 5 0s4 3 6.500-5" stroke="#a0a0a0" strokeWidth="1.200" />
      </Icon>
      <span className="ml-[10px] mt-[3px] w-[126px] font-['Liberation_Sans',sans-serif] text-[15px] text-[#9c9c9c]">End</span>
      <span className="w-[40px] font-['Roboto',sans-serif] text-[15px] tracking-[-0.100px] text-[#2d8ceb]">100.0</span>
      <span className="mt-[2px] w-[355px] font-['Roboto',sans-serif] text-[15px] text-[#8c8c8c]">%</span>
      <Whip />
    </div>
  );
}

function HeaderDivider({ c }: { c: string }) {
  return <div className={`h-[14px] w-px shrink-0 bg-[#151515] ${c}`} />;
}

function LayerColumns() {
  return (
    <div className="flex w-[884px] shrink-0 flex-col">
      <div className="flex h-[48px] shrink-0 items-start">
        <div className="w-[136px] shrink-0 whitespace-nowrap">
          <div className="pl-[17px] pt-[8px] text-[20px] font-bold leading-[22px] tracking-[0.100px] text-[#2d8ceb]">0:00:05:03</div>
          <div className="-mt-px pl-[13px] text-[13.500px] leading-[18px] tracking-[0.250px] text-[#1f5a9c]">00154 (30.00 fps)</div>
        </div>
        <div className="mt-[13px] flex h-[25px] w-[496px] shrink-0 items-center rounded-[4px] border border-[#303030] bg-[#171717] pl-[8px]">
          <SearchIcon />
        </div>
        <div className="flex h-[50px] items-center [&>*]:shrink-0">
          <Icon w={22} h={17} c="ml-[20px]">
            <path d="M0 2h7v3.500H0zM12.500 1.500H19V6h-6.500zM12.500 8.500H19V13h-6.500z" fill={G} />
            <path d="M6 3.700h7M9.500 3.700v7H13" stroke={G} strokeWidth="1.300" />
            <path d="M15.500 13.500h6.500L18.700 17z" fill={G} />
          </Icon>
          <Icon w={22} h={22} c="ml-[19px]">
            <path d="m14.500 8 6.500 3v7l-6.500 3.300L8 18v-7zM8 11l6.500 3.200L21 11M14.500 14.200v7" stroke={G} strokeWidth="1.400" />
            <path d="M5.500 0v11M0 5.500h11M1.500 1.500l8 8M9.500 1.500l-8 8" stroke={G} strokeWidth="1.200" />
            <circle cx="5.500" cy="5.500" r="2.500" fill={G} />
          </Icon>
          <Icon w={21} h={18} c="ml-[21px]">
            <path d="M0 10h21v7H0z" fill="#1d5a9a" />
            <path d="M4 9c0-5 3-8 6.500-8S17 4 17 9z" fill="#2d8ceb" />
            <path d="M7 4.500h2.300v2.500H7zM11.700 4.500H14v2.500h-2.300z" fill="#222" />
            <path d="M0 9.500h21" stroke="#2d8ceb" strokeWidth="1.600" />
            <path d="M10.500 7v8" stroke="#2d8ceb" strokeWidth="2.500" />
          </Icon>
          <div className="ml-[13px]"><FrameBlend /></div>
          <div className="ml-[15px]"><Blur /></div>
          <Icon w={21} h={20} c="ml-[24px]">
            <path d="M2.500 3.500h17.800v15.800H2.500zM5 3V0M9 3V1M13 3V0M17 3V1M2 7H0M2 11H1M2 15H0" stroke={G} strokeWidth="1.300" />
            <path d="M4.500 7.500c6 0 6 8 13.500 8" stroke={G} strokeWidth="1.300" />
          </Icon>
        </div>
      </div>
      <div className="flex h-[25px] shrink-0 items-center border-b border-t border-black bg-[#333] pt-[2px] text-[12px] tracking-[-0.400px] text-[#a6a6a6] [&>*]:shrink-0">
        <div className="ml-[7px]"><Eye /></div>
        <Icon w={16} h={14} c="ml-[4px]">
          <path d="M0 4h3l5-4v14l-5-4H0z" fill={G} />
          <path d="M9.500 4.500c1.300 1.500 1.300 3.500 0 5M11.500 1.500c4 3 4 8 0 11" stroke={G} strokeWidth="1.400" />
        </Icon>
        <div className="ml-[6px] h-[9px] w-[9px] rounded-full bg-[#bcbcbc]" />
        <div className="ml-[8px]"><LockIcon /></div>
        <HeaderDivider c="ml-[7px]" />
        <div className="ml-[16px]"><Tag /></div>
        <HeaderDivider c="ml-[7px]" />
        <span className="ml-[7px] w-[33px]">#</span>
        <HeaderDivider c="" />
        <span className="ml-[7px] w-[167px] tracking-[-0.550px]">Source Name</span>
        <HeaderDivider c="" />
        <div className="ml-[5px]"><Shy /></div>
        <div className="ml-[4px]"><Sun c="text-[#c0c0c0]" /></div>
        <Icon w={14} h={14} c="ml-[5px]">
          <path d="M0 0h4v4H0zM4 4.500h3V7H4zM6.500 7h3v2.500h-3zM10 10h4v4h-4z" fill={G} />
        </Icon>
        <div className="ml-[5px] w-[16px]"><Fx /></div>
        <div className="w-[20px] scale-[.9]"><FrameBlend /></div>
        <Blur />
        <Icon w={14} h={14} c="ml-[4px]">
          <circle cx="7" cy="7" r="6.200" fill="#333" stroke={G} strokeWidth="1.300" />
          <path d="M11.500 2.500A6.300 6.300 0 0 1 7 13.300 6.300 6.300 0 0 1 2.500 11.500z" fill={G} />
        </Icon>
        <div className="ml-[4px]"><Cube /></div>
        <HeaderDivider c="ml-[17px]" />
        <span className="ml-[6px] w-[96px] tracking-[-0.300px]">Mode</span>
        <span className="w-[21px] text-[#8c8c8c]">T</span>
        <span className="w-[82px]">TrkMat</span>
        <HeaderDivider c="" />
        <span className="ml-[7px] w-[138px] tracking-[-0.550px]">Parent &amp; Link</span>
        <HeaderDivider c="" />
      </div>
      {layers.map((l) => (
        <React.Fragment key={l.n}>
          <LayerRow l={l} />
          {!l.violet && <PropertyRow />}
        </React.Fragment>
      ))}
    </div>
  );
}

const ticks = ["10f", "20f", "05:00f", "10f", "20f", "06:00f", "10f", "20f", "07:00f"];
const compMarkers = [
  { x: 377, t: "2" },
  { x: 442, t: "3" },
  { x: 508, t: "4" },
  { x: 575, t: "1" },
];

function Keyframe({ c, flip }: { c: string; flip?: boolean }) {
  return (
    <Icon w={11} h={12} c={c}>
      <path d="M5.500 0v12L0 6z" fill={flip ? "#b8b8b8" : "#7d7d7d"} />
      <path d="M5.500 0v12L11 6z" fill={flip ? "#7d7d7d" : "#b8b8b8"} />
    </Icon>
  );
}

function TimeColumns() {
  return (
    <div className="relative flex w-[1011px] shrink-0 flex-col border-l border-black">
      <div className="flex h-[48px] shrink-0 flex-col">
        <div className="mt-[10px] flex h-[13px] items-center rounded-t-[6px] bg-[#1f1f1f] [&>*]:shrink-0">
          <div className="ml-[89px] h-[12px] w-[50px] bg-[#3a3631]" />
          <div className="h-[10px] w-[8px] rounded-l-full bg-[#2d8ceb]" />
          <div className="flex h-[12px] w-[102px] items-center border border-r-2 border-[#111] bg-[#686868] pl-[30px]">
            <div className="h-[10px] w-[2px] border-l border-[#9a9a9a] bg-[#2d8ceb]" />
          </div>
          <div className="h-[10px] w-[8px] rounded-r-full bg-[#2d8ceb]" />
        </div>
        <div className="flex h-[25px] bg-[#222] font-['Roboto',sans-serif] text-[14px] leading-[20px] text-[#9a9a9a]">
          {ticks.map((t, i) => (
            <div key={i} className="flex h-[25px] w-[110px] shrink-0 flex-col items-center pl-[2px]">
              <span className="z-10 h-[17px] -translate-x-[2px] whitespace-nowrap pt-px">{t}</span>
              <div className="h-[8px] w-[2px] bg-[#6a6a6a]" />
            </div>
          ))}
        </div>
      </div>
      <div className="flex h-[20px] shrink-0 items-center border-y border-black bg-[#222]">
        <div className="h-[18px] w-[771px] border-b border-t border-b-[#4a4a4a] border-t-[#6f6f6f] bg-[#606060]" />
        <div className="h-[18px] w-[7px] rounded-r-[4px] bg-[#2d8ceb]" />
        <div className="mb-[12px] ml-[47px] h-[6px] w-[2px] bg-[#555]" />
        <div className="mb-[12px] ml-[108px] h-[6px] w-[2px] bg-[#555]" />
      </div>
      <div className="h-[5px] shrink-0 border-b border-black bg-[#1d1d1d]">
        <div className="h-[4px] w-[210px] bg-[#12c11c]" />
      </div>
      {layers.map((l) => (
        <React.Fragment key={l.n}>
          <div className="flex h-[21.250px] border-b border-[#1f1f1f]">
            <div className={l.violet ? "w-[220px] bg-[#3a3a3a]" : "w-[210px] bg-[#3a3a3a]"} />
            {l.violet ? (
              <>
                <div className="w-[551px] border-b border-l border-[#4e2b52] border-l-[#7a4080] bg-[#66336a]" />
                <div className="grow border-b border-[#48264c] bg-[#5e2d62]" />
              </>
            ) : (
              <>
                <div className="w-[561px] border-b-2 border-l border-[#3f4668] border-l-[#6570a8] bg-[#525c8c]" />
                <div className="grow border-b-2 border-[#3a4162] bg-[#4b5585]" />
              </>
            )}
          </div>
          {!l.violet && (
            <div className="flex h-[21.250px] border-b border-[#1f1f1f]">
              <div className="flex w-[771px] items-center bg-[#333] pt-[2px]">
                <Keyframe c="ml-[206px]" />
                <Keyframe c="ml-[87px]" flip />
              </div>
              <div className="grow bg-[#252525]" />
            </div>
          )}
        </React.Fragment>
      ))}

      {/* markers and playhead lie over the ruler and the bars */}
      {compMarkers.map((m) => (
        <div key={m.t} className="absolute top-[49px] flex items-start" style={{ left: m.x - 7 }}>
          <div className="z-10 mt-[7px]"><RoofMarker /></div>
          <div className="-ml-[7px] h-[16px] w-[24px] border border-[#3a3a3a] bg-[#b4b4b4] pl-[7px] font-['Roboto',sans-serif] text-[14px] leading-[15px] text-[#1c1c1c]">{m.t}</div>
        </div>
      ))}
      <div className="absolute left-[303px] top-[117px] flex items-start">
        <div className="z-10 mt-[8px]"><RoofMarker /></div>
        <div className="-ml-[7px] h-[16px] w-[72px] border border-[#4b2c50] bg-[#b398b6] pl-[8px] font-['Roboto',sans-serif] text-[14px] leading-[17px] tracking-[0.200px] text-[#262026]">shelter-1</div>
      </div>
      <div className="absolute left-[248px] top-[138px] flex items-start">
        <div className="z-10 mt-[8px]"><RoofMarker /></div>
        <div className="-ml-[7px] h-[16px] w-[87px] border border-[#333a5a] bg-[#a6acc9] pl-[8px] font-['Roboto',sans-serif] text-[14px] leading-[17px] tracking-[0.200px] text-[#20222c]">broken line</div>
      </div>
      <div className="absolute left-[309px] top-[47px] z-20 h-[301px] w-px bg-[#2d8ceb]" />
      <Icon w={14} h={18} c="absolute left-[303px] top-[28px] z-20">
        <path d="M0 1h14v9l-6 8H6l-6-8z" fill="#2d8ceb" />
        <path d="M7 9v9M4.500 8.500h5" stroke="#14385f" strokeWidth="1.200" />
      </Icon>
    </div>
  );
}

function Timeline() {
  return (
    <section className="flex h-[397px] w-full shrink-0 flex-col overflow-hidden bg-[#232323]">
      <div className="flex h-[46px] shrink-0 items-center text-[14px] text-[#8c8c8c] [&>*]:shrink-0">
        <div className="ml-[31px] h-[13px] w-[13px] bg-[#ad9877]" />
        <span className="ml-[13px] w-[92px]">0_0</span>
        <div className="h-[13px] w-[12px] bg-[#ad9877]" />
        <span className="ml-[14px] w-[73px]">2_4</span>
        <div className="flex h-[48px] w-[234px] items-center self-start border-b-2 border-[#b9b9b9] text-[#bcbcbc] [&>*]:shrink-0">
          <div className="mt-[6px]"><Cross /></div>
          <div className="ml-[12px] h-[13px] w-[13px] bg-[#ad9877]" />
          <span className={`${JP} ml-[14px] w-[157px]`}>プリコンポジション</span>
          <span className="w-[22px]">3</span>
          <Burger c="mt-[4px] text-[#b4b4b4]" />
        </div>
      </div>
      <div className="flex shrink-0">
        <LayerColumns />
        <TimeColumns />
        <div className="flex w-[22px] flex-col items-center">
          <Icon w={15} h={19} c="mt-[50px]">
            <path d="M0 1h14.500v12L7.200 18.500 0 13z" fill="#a9a9a9" />
          </Icon>
          <div className="mt-[3px] h-px w-full bg-black" />
          <Icon w={19} h={17} c="mt-[3px]">
            <path d="M8 3h10.500v9.500H8z" fill="#a9a9a9" />
            <path d="M.8 11 9 1v10z" fill="#232323" stroke="#a9a9a9" strokeWidth="1.400" />
            <circle cx="9" cy="12" r="4" fill="#232323" stroke="#a9a9a9" strokeWidth="1.500" />
          </Icon>
          <div className="mt-[2px] flex w-full grow justify-center bg-[#1c1c1c]">
            <div className="mt-[138px] h-[34px] w-[19px] rounded-[10px] bg-[#343434]" />
          </div>
        </div>
      </div>
    </section>
  );
}

export default function App() {
  return (
    <main className="relative flex h-[929px] w-[1917px] flex-col overflow-hidden bg-[#161616] font-['Noto_Sans','Noto_Sans_CJK_JP',sans-serif]">
      <div className="flex h-[5px] shrink-0 items-start bg-[#232323] [&>*]:shrink-0">
        <div className="ml-[45px] h-[3px] w-[2px] bg-[#343434]" />
        <div className="ml-[14px] h-px w-[2px] bg-[#888]" />
        <div className="ml-[86px] h-[3px] w-[2px] bg-[#343434]" />
        <div className="ml-[5px] h-[3px] w-[29px] rounded-b-[3px] border-b border-[#3c3c3c] bg-[#171717]" />
        <div className="ml-[25px] h-[2px] w-[4px] bg-[#909090]" />
        <div className="ml-[28px] h-[2px] w-[4px] bg-[#909090]" />
        <div className="ml-[7px] h-[3px] w-[2px] bg-[#343434]" />
        <div className="ml-[98px] h-[2px] w-[4px] bg-[#909090]" />
        <div className="ml-[27px] h-[2px] w-[4px] bg-[#909090]" />
        <div className="ml-[27px] h-[2px] w-[4px] bg-[#909090]" />
        <div className="ml-[8px] h-[3px] w-px bg-[#343434]" />
        <div className="ml-[130px] h-[2px] w-[4px] bg-[#909090]" />
        <div className="ml-[36px] h-[2px] w-[4px] bg-[#909090]" />
        <div className="ml-[35px] h-[5px] w-[2px] bg-[#343434]" />
        <div className="ml-[26px] h-[3px] w-[25px] rounded-b-[3px] border-b border-[#3c3c3c] bg-[#171717]" />
        <div className="ml-[43px] h-px w-[2px] bg-[#aaa]" />
        <div className="ml-[332px] h-[5px] w-px bg-[#161616]" />
        <div className="ml-[600px] h-[5px] w-[3px] bg-[#303030]" />
        <div className="ml-[4px] h-[3px] w-[243px] rounded-b-[4px] border-x border-b border-[#303030] bg-[#171717]" />
      </div>
      <div className="mt-[3px] flex h-[518px] shrink-0">
        <ProjectPanel />
        <CompositionPanel />
        <RightColumn />
      </div>
      <div className="h-[6px] shrink-0" />
      <Timeline />
      <div className="pointer-events-none absolute left-[844px] top-[122px] z-30 h-[356px] w-[316px] border-2 border-[#ed1c24]" />
      <div className="pointer-events-none absolute left-[6px] top-[714px] z-30 h-[216px] w-[1349px] border-2 border-[#ed1c24]" />
    </main>
  );
}
